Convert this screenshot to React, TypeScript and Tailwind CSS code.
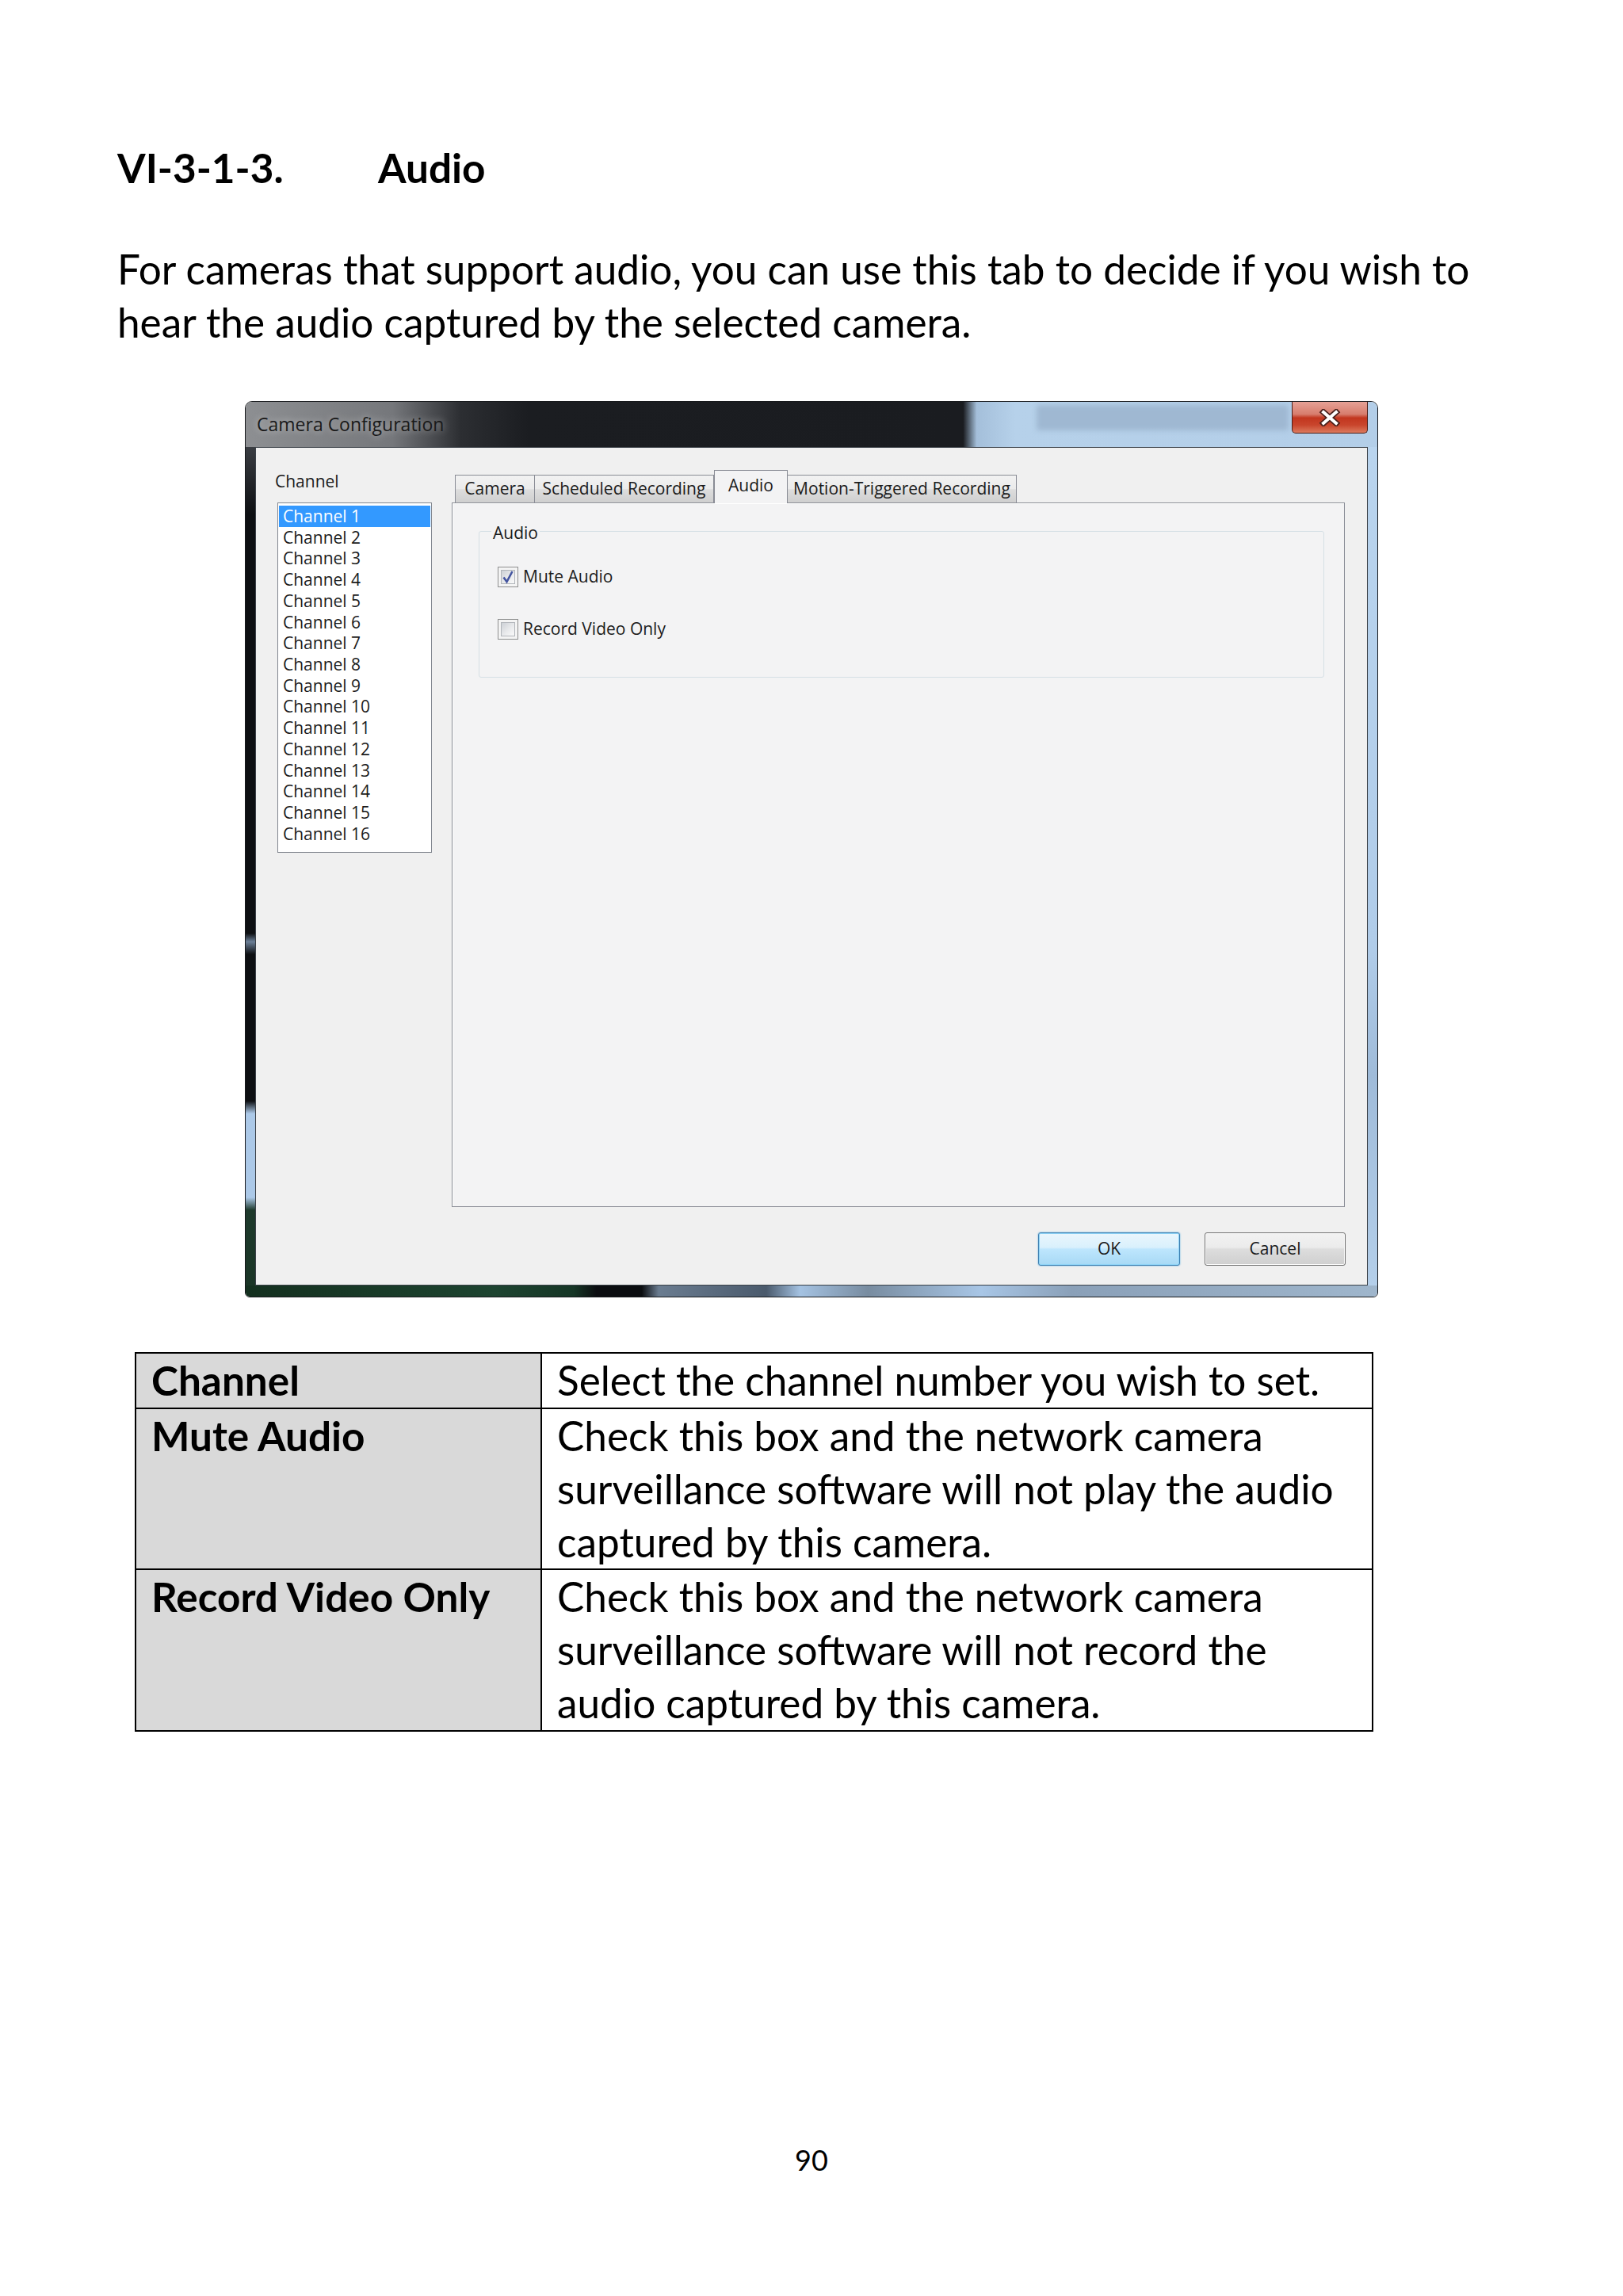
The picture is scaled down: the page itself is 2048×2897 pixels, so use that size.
import React from 'react'

const channels = Array.from({ length: 16 }, (_, i) => `Channel ${i + 1}`)

function Checkbox({ checked }: { checked?: boolean }) {
  return (
    <span className="flex h-[26px] w-[26px] shrink-0 items-center justify-center border border-[#8e8f8f] bg-[#f4f4f4] p-[3px]">
      <span className="flex h-full w-full items-center justify-center border border-[#b1b5ba] bg-[linear-gradient(135deg,#cdd1d6_0%,#e9eaec_55%,#fafafa_100%)]">
        {checked && (
          <svg width="16" height="18" viewBox="0 0 16 18">
            <path d="M2.5 9.5 L6.5 15 L13.5 2" fill="none" stroke="#4455a0" strokeWidth="2.6" />
          </svg>
        )}
      </span>
    </span>
  )
}

function Tab({ label, active, w, first }: { label: string; active?: boolean; w: string; first?: boolean }) {
  if (active) {
    return (
      <div
        className={`relative z-10 -mb-px flex h-[42px] ${w} justify-center border border-b-0 border-[#898c95] bg-[#f3f3f4] pt-[4px] text-[21px] leading-[28px] text-[#1b1b1b]`}
      >
        {label}
      </div>
    )
  }
  return (
    <div
      className={`flex h-[35px] ${w} items-center justify-center border border-b-0 ${first ? '' : 'border-l-0'} border-[#898c95] bg-[linear-gradient(180deg,#f2f2f2_0%,#ebebeb_50%,#dddddd_52%,#cfcfcf_100%)] text-[21px] text-[#1b1b1b]`}
    >
      {label}
    </div>
  )
}

function CameraDialog() {
  return (
    <div className="relative flex h-[1131px] w-[1430px] flex-col overflow-hidden rounded-t-[9px] rounded-b-[6px] border border-[#17191c] [font-family:'Open_Sans',sans-serif]">
      {/* title bar */}
      <div className="flex h-[57px] shrink-0 items-center bg-[linear-gradient(90deg,#8d8f92_0%,#75777b_13%,#2c2e32_19%,#1b1d21_25%,#1a1c20_63.4%,#a4bfda_64.6%,#b6d1ea_68%,#b3cee8_100%)] pl-[14px]">
        <span className="text-[23px] text-[#1a1a1a] [text-shadow:0_0_10px_rgba(255,255,255,0.55)]">
          Camera Configuration
        </span>
      </div>

      {/* blurred window behind the glass */}
      <div className="absolute left-[998px] top-[4px] h-[32px] w-[318px] rounded-[3px] bg-[#9fb8d2] blur-[3px]" />

      <div className="absolute right-[12px] top-0 flex h-[40px] w-[96px] items-center justify-center rounded-b-[5px] border border-t-0 border-[#4a1d17] bg-[linear-gradient(180deg,#e6a196_0%,#d77d6d_40%,#c2361f_52%,#c9452c_75%,#dc7a5e_100%)]">
        <svg width="30" height="22" viewBox="0 0 30 22">
          <path d="M7 4 L23 18 M23 4 L7 18" stroke="#4a1f1a" strokeWidth="7.5" strokeLinecap="square" />
          <path d="M7 4 L23 18 M23 4 L7 18" stroke="#ffffff" strokeWidth="4" strokeLinecap="square" />
        </svg>
      </div>

      <div className="flex flex-1">
        <div className="w-[12px] bg-[linear-gradient(180deg,#3a3d42_0%,#0d0f12_8%,#0d0f12_58%,#6c8098_59%,#0d0f12_60.5%,#0d0f12_78%,#acc9e8_79.5%,#acc9e8_89.5%,#1e3a2c_91%,#1a3526_100%)]" />

        {/* client area */}
        <div className="flex flex-1 flex-col border border-[#3b4148] bg-[#f0f0f0]">
          <div className="flex">
            <div className="w-[247px] pl-[27px] pt-[29px]">
              <div className="-ml-[3px] text-[21px] leading-[26px] text-[#1b1b1b]">Channel</div>
              <div className="mt-[14px] h-[442px] w-[195px] border border-[#828790] bg-white px-px pt-[3px]">
                {channels.map((c, i) => (
                  <div
                    key={c}
                    className={`h-[26.73px] pl-[5px] text-[21px] leading-[26.73px] ${i === 0 ? 'bg-[#3399ff] text-white' : 'text-[#1b1b1b]'}`}
                  >
                    {c}
                  </div>
                ))}
              </div>
            </div>

            <div className="w-[1127px] pt-[28px]">
              <div className="flex items-end pl-[4px]">
                <Tab label="Camera" w="w-[101px]" first />
                <Tab label="Scheduled Recording" w="w-[226px]" />
                <Tab label="Audio" w="w-[93px]" active />
                <Tab label="Motion-Triggered Recording" w="w-[289px]" />
              </div>
              <div className="h-[889px] border border-[#898c95] bg-[#f3f3f4] pl-[33px] pt-[35px] shadow-[inset_1px_1px_0_#ffffff]">
                <div className="relative h-[185px] w-[1067px] rounded-[3px] border border-[#d5dfe5] pl-[23px] pt-[44px]">
                  <span className="absolute -top-[12px] left-[15px] bg-[#f3f3f4] px-[2px] text-[21px] leading-[26px] text-[#1b1b1b]">
                    Audio
                  </span>
                  <label className="flex h-[26px] items-center gap-[6px] text-[21px] text-[#1b1b1b]">
                    <Checkbox checked />
                    Mute Audio
                  </label>
                  <label className="mt-[40px] flex h-[26px] items-center gap-[6px] text-[21px] text-[#1b1b1b]">
                    <Checkbox />
                    Record Video Only
                  </label>
                </div>
              </div>
            </div>
          </div>

          <div className="mt-[32px] flex justify-end gap-[31px] pr-[27px]">
            <button className="h-[42px] w-[179px] rounded-[3px] border border-[#3c7fb1] bg-[linear-gradient(180deg,#eaf6fd_0%,#d9f0fc_45%,#bee6fd_50%,#a7d9f5_100%)] text-[21px] text-[#1b1b1b] shadow-[inset_0_0_0_1px_#8fd4f7,0_0_2px_#48a6e0]">
              OK
            </button>
            <button className="h-[42px] w-[178px] rounded-[3px] border border-[#707070] bg-[linear-gradient(180deg,#f2f2f2_0%,#ebebeb_45%,#dddddd_50%,#cfcfcf_100%)] text-[21px] text-[#1b1b1b] shadow-[inset_0_0_0_1px_#fbfbfb]">
              Cancel
            </button>
          </div>
        </div>

        <div className="w-[12px] bg-[linear-gradient(180deg,#b9d4ee_0%,#b0cce9_60%,#9fbbd9_75%,#b4cfea_100%)]" />
      </div>

      <div className="h-[14px] shrink-0 bg-[linear-gradient(90deg,#14301f_0%,#1d4430_22%,#163626_29%,#0b0d10_31%,#0b0d10_35%,#6a7c90_36.5%,#4a5a6c_46%,#a4c2e2_49%,#788ca0_55%,#a8c6e6_65%,#8aa0b8_73%,#9fb6cc_100%)]" />
    </div>
  )
}

const rows = [
  { term: 'Channel', lines: ['Select the channel number you wish to set.'], h: 'h-[70px]' },
  {
    term: 'Mute Audio',
    lines: ['Check this box and the network camera', 'surveillance software will not play the audio', 'captured by this camera.'],
    h: 'h-[202px]',
  },
  {
    term: 'Record Video Only',
    lines: ['Check this box and the network camera', 'surveillance software will not record the', 'audio captured by this camera.'],
    h: 'h-[204px]',
  },
]

export default function App() {
  return (
    <div className="min-h-[2897px] w-[2048px] bg-white pb-[10px] text-black [font-family:Lato,sans-serif]">
      <div className="px-[148px] pt-[178px]">
        <h2 className="flex text-[51.3px] font-bold leading-[67px]">
          <span className="w-[329px]">VI-3-1-3.</span>
          <span>Audio</span>
        </h2>
        <p className="mt-[61px] text-[51.3px] leading-[67px]">
          For cameras that support audio, you can use this tab to decide if you wish to
          <br />
          hear the audio captured by the selected camera.
        </p>
      </div>

      <div className="ml-[309px] mt-[66px]">
        <CameraDialog />
      </div>

      <table className="ml-[170px] mt-[69px] w-[1563px] border-collapse text-[51.3px] leading-[67px]">
        <tbody>
          {rows.map((r) => (
            <tr key={r.term} className={r.h}>
              <td className="w-[512px] border-2 border-black bg-[#d9d9d9] px-[19px] align-top font-bold">{r.term}</td>
              <td className="border-2 border-black px-[19px] align-top">
                {r.lines.map((l) => (
                  <div key={l}>{l}</div>
                ))}
              </td>
            </tr>
          ))}
        </tbody>
      </table>

      <div className="mt-[518px] text-center text-[36px] leading-[44px]">90</div>
    </div>
  )
}
